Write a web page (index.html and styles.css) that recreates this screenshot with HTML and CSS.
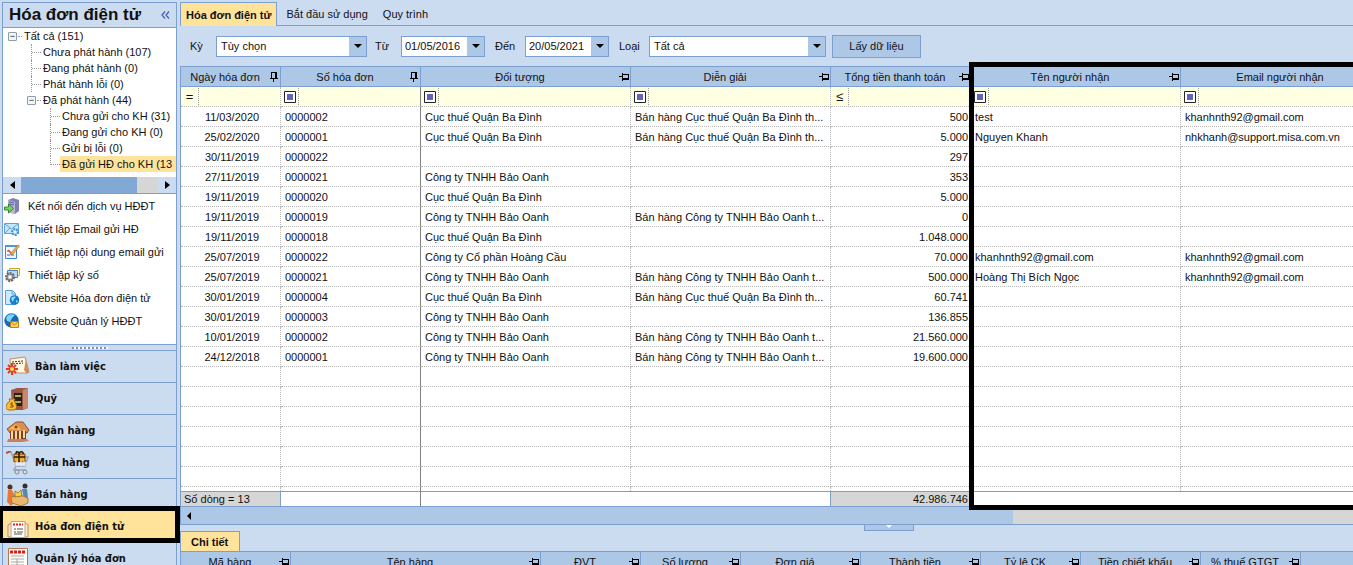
FILE: index.html
```html
<!DOCTYPE html>
<html lang="vi">
<head>
<meta charset="utf-8">
<title>Hóa đơn điện tử</title>
<link rel="stylesheet" href="styles.css">
</head>
<body>
<svg class="defs" aria-hidden="true">
  <symbol id="pin" viewBox="0 0 10 10"><path d="M0 4.500h3M3.500 1v8M4 2.500h5M9.500 2v6" fill="none" stroke="#000"/><path d="M4 6h6v2H4z"/></symbol>
  <symbol id="pinned" viewBox="0 0 10 10"><path d="M2.500 1v5M2 .5h6M1 6.500h8M4.500 7v3" fill="none" stroke="#000"/><path d="M6 0h2v6H6z"/></symbol>
  <symbol id="match" viewBox="0 0 12 12"><path d="M.5.5h11v11H.5z" fill="#fff" stroke="#223"/><path d="M3 3h6v6H3z" fill="#6464b8"/></symbol>
  <symbol id="down" viewBox="0 0 8 4"><path d="M0 0h8L4 4z"/></symbol>
</svg>
<div class="app">
  <aside class="sidebar">
    <header class="side-head"><h1>Hóa đơn điện tử</h1><button class="collapse" aria-label="Thu gọn"><svg width="9" height="8" viewBox="0 0 9 8"><path d="M4 .5L1 4l3 3.500M8 .5L5 4l3 3.500" fill="none" stroke="#3f66ac" stroke-width="1.300"/></svg></button></header>
    <div class="tree">
      <div class="node root"><button class="fold" aria-label="Thu gọn">−</button><i class="stub"></i><span>Tất cả (151)</span></div>
      <div class="node one"><i class="branch"></i><span>Chưa phát hành (107)</span></div>
      <div class="node one"><i class="branch"></i><span>Đang phát hành (0)</span></div>
      <div class="node one"><i class="branch"></i><span>Phát hành lỗi (0)</span></div>
      <div class="node sub"><button class="fold" aria-label="Thu gọn">−</button><i class="stub"></i><span>Đã phát hành (44)</span></div>
      <div class="node two"><i class="branch"></i><span>Chưa gửi cho KH (31)</span></div>
      <div class="node two"><i class="branch"></i><span>Đang gửi cho KH (0)</span></div>
      <div class="node two"><i class="branch"></i><span>Gửi bị lỗi (0)</span></div>
      <div class="node two"><i class="branch last"></i><span class="picked">Đã gửi HĐ cho KH (13</span></div>
    </div>
    <div class="hscroll"><button aria-label="Trái"><svg width="5" height="8" viewBox="0 0 5 8"><path d="M5 0v8L0 4z"/></svg></button><div class="track"><div class="thumb"></div></div><button aria-label="Phải"><svg width="5" height="8" viewBox="0 0 5 8"><path d="M0 0v8l5-4z"/></svg></button></div>
    <ul class="tasks">
      <li><a href="#"><svg width="16" height="16" viewBox="0 0 16 16"><path d="M4 2l5-2 6 2v11l-4 3-7-2z" fill="#8080b8"/><path d="M4 2l7 2v12l-7-2z" fill="#b4b4dc"/><path d="M5 4l5 1M5 6l5 1" stroke="#60609a"/><path d="M.5 9h4V6l5 4.500-5 4.500v-3h-4z" fill="#7ed060" stroke="#2f8a28"/></svg>Kết nối đến dịch vụ HĐĐT</a></li>
      <li><a href="#"><svg width="16" height="16" viewBox="0 0 16 16"><path d="M.5 2.500h14v10H.5z" fill="#c6e6fa" stroke="#5aa4dc"/><path d="M1 3l6.500 5L14 3M1 12l5-5" fill="none" stroke="#5aa4dc"/><circle cx="11" cy="11" r="3" fill="#b0d8f4" stroke="#4896d0" stroke-width="2" stroke-dasharray="2 1"/><circle cx="11" cy="11" r="1" fill="#fff"/></svg>Thiết lập Email gửi HĐ</a></li>
      <li><a href="#"><svg width="16" height="16" viewBox="0 0 16 16"><path d="M1.500 1.500h11v13h-11z" fill="#eef6ff" stroke="#4288c8"/><path d="M1 1h12v2H1z" fill="#4a98dc"/><path d="M3 6h3v2H3zM3 10h3v2H3zM7 10h3v2H7z" fill="#80b8e8"/><path d="M4 6l4 4" fill="none" stroke="#e05030" stroke-width="1.500"/><path d="M7 9l7-8 1.500 1L9 10l-2.500 1z" fill="#f4b840" stroke="#a86c28" stroke-width=".7"/></svg>Thiết lập nội dung email gửi</a></li>
      <li><a href="#"><svg width="16" height="16" viewBox="0 0 16 16"><path d="M5.500 1.500h10v7h-10z" fill="#fff3b0" stroke="#e0a020"/><path d="M3.500 3.500h10v7h-10z" fill="#b8dcf8" stroke="#3c88cc"/><circle cx="6" cy="10" r="4" fill="#ccc" stroke="#666" stroke-width="2" stroke-dasharray="2 1"/><circle cx="6" cy="10" r="3" fill="#b8b8b8" stroke="#777"/><circle cx="6" cy="10" r="1.500" fill="#fff"/></svg>Thiết lập ký số</a></li>
      <li><a href="#"><svg width="16" height="16" viewBox="0 0 16 16"><path d="M1.500.5h7l3 3v11h-10z" fill="#cfe8fc" stroke="#58a0d8"/><path d="M8 1v3h3" fill="none" stroke="#58a0d8"/><circle cx="10.500" cy="10" r="4.800" fill="#187cc8"/><path d="M7 9c1-3 4-3 5-2l-2 2-1 3zM12 10l2 1-2 2z" fill="#8ce0f8"/></svg>Website Hóa đơn điện tử</a></li>
      <li><a href="#"><svg width="16" height="16" viewBox="0 0 16 16"><circle cx="7.500" cy="7.500" r="7.200" fill="#1868b8"/><path d="M2 5c2-5 7-4 9-3L8 5 6 9 3 8z" fill="#7cd4fa"/><path d="M6.500 8.500h8v6h-8z" fill="#ffd060" stroke="#c08018"/><path d="M7 9l3.500 3L14 9" fill="none" stroke="#c08018"/></svg>Website Quản lý HĐĐT</a></li>
    </ul>
    <div class="splitter"></div>
    <nav class="modules">
      <a href="#"><svg width="24" height="24" viewBox="0 0 24 24"><path d="M4 4l15-2 4 15-3 1H5z" fill="#fff6dc" stroke="#b89468"/><path d="M20 4l3 13-2 2-3-4z" fill="#c89060"/><path d="M6 7l11-1M7 9l10-1" stroke="#333" stroke-dasharray="2 1"/><path d="M6 8v12M0 14h12M2 10l8 8M10 10l-8 8" stroke="#e83828" stroke-width="2"/><circle cx="6" cy="14" r="2" fill="#ffe040"/></svg>Bàn làm việc</a>
      <a href="#"><svg width="24" height="24" viewBox="0 0 24 24"><path d="M5 3l6-2h11v20l-5 2H6z" fill="#9a5844"/><path d="M17 3l5-2v20l-5 2z" fill="#c88870"/><path d="M8 6h8v13H8z" fill="#282018"/><path d="M9 9h6M9 15h6" stroke="#a8b060" stroke-width="2"/><path d="M3 12l1 2c-5 3-5 9-1 9h4c5 0 4-6 1-9l1-2z" fill="#f8c030" stroke="#a86810"/><path d="M7 16H5v2h2v2H4" fill="none" stroke="#804808"/></svg>Quỹ</a>
      <a href="#"><svg width="24" height="24" viewBox="0 0 24 24"><path d="M1 10l9-7h7l6 8-2 3H4z" fill="#d89058" stroke="#905030"/><path d="M4 12h16v8H4z" fill="#7a4030"/><path d="M6 12v8M10 12v8M14 12v8M18 11v8" stroke="#ffd890" stroke-width="2"/><path d="M2 20h19l2 2-7 1H1z" fill="#c88060"/><path d="M3 10l7-5 5 6z" fill="#ffb848"/><circle cx="10" cy="8" r="1.500" fill="#804010"/></svg>Ngân hàng</a>
      <a href="#"><svg width="24" height="24" viewBox="0 0 24 24"><path d="M0 2l5-2" stroke="#b05050" stroke-width="2"/><path d="M5 1l3 8 2 6h9l3-9H8M10 15l-2 4h12" fill="none" stroke="#98a4b8" stroke-width="1.500"/><path d="M8 3h11v8H8z" fill="#f0b030" stroke="#704010"/><path d="M13 3v8M8 6h11M10 3c0-4 3-2 3 0 1-4 5-2 4 0" fill="none" stroke="#301808" stroke-width="1.500"/><path d="M8 12h13M9 14h11M11 10v5M15 10v5M18 10v5" stroke="#eef2fa"/><circle cx="11" cy="21" r="2" fill="#dde" stroke="#789"/><circle cx="19" cy="21" r="2" fill="#dde" stroke="#789"/></svg>Mua hàng</a>
      <a href="#"><svg width="24" height="24" viewBox="0 0 24 24"><circle cx="4" cy="4" r="2.500" fill="#503020"/><path d="M2 7h4l3 6-1 7-3 3-4-4z" fill="#e87838"/><circle cx="19" cy="3" r="2.500" fill="#303030"/><path d="M16 6h5l1 9-4 1z" fill="#5888b0"/><path d="M5 14l9-2 8 3v5l-7 3-9-3z" fill="#e8b870" stroke="#b07838"/><path d="M9 8l3 2 3-3 1 6-7 1z" fill="#f8d040" stroke="#806018" stroke-width=".7"/></svg>Bán hàng</a>
      <a href="#" class="active"><svg width="24" height="24" viewBox="0 0 24 24"><path d="M2 10l6-3h10l4 3v12H2z" fill="#f8ead0" stroke="#b88c68"/><path d="M5 6.500h14v16H5z" fill="#fffdf8" stroke="#c4a080"/><path d="M7 9.500h10" stroke="#e02020" stroke-width="2" stroke-dasharray="2 1"/><path d="M8 14h2m1 0h6M8 17h2m1 0h6M8 19h8" stroke="#555"/></svg>Hóa đơn điện tử</a>
      <a href="#"><svg width="24" height="24" viewBox="0 0 24 24"><path d="M2.500 1.500h19v22h-19z" fill="#fffdf6" stroke="#b87850"/><path d="M4 5h16" stroke="#e01818" stroke-width="3" stroke-dasharray="3 1"/><path d="M5 9h13M5 12h13M5 15h13M5 18h13M11 12v10" stroke="#a8a8a8"/></svg>Quản lý hóa đơn</a>
    </nav>
  </aside>
  <main class="content">
    <div class="tabs"><button class="tab on">Hóa đơn điện tử</button><button class="tab">Bắt đầu sử dụng</button><button class="tab">Quy trình</button></div>
    <form class="filters">
      <label for="period">Kỳ</label>
      <div class="combo wide"><select id="period"><option>Tùy chọn</option></select><span class="drop"><svg width="8" height="4"><use href="#down"/></svg></span></div>
      <label for="from">Từ</label>
      <div class="combo date"><input id="from" value="01/05/2016"><span class="drop"><svg width="8" height="4"><use href="#down"/></svg></span></div>
      <label for="to">Đến</label>
      <div class="combo date"><input id="to" value="20/05/2021"><span class="drop"><svg width="8" height="4"><use href="#down"/></svg></span></div>
      <label for="kind">Loại</label>
      <div class="combo wider"><select id="kind"><option>Tất cả</option></select><span class="drop"><svg width="8" height="4"><use href="#down"/></svg></span></div>
      <button type="button" class="load">Lấy dữ liệu</button>
    </form>
    <section class="grid-area">
      <div class="grid">
      <table class="invoices">
        <colgroup><col class="w100"><col class="w140"><col class="w210"><col class="w200"><col class="w140"><col class="w210"><col class="w210"></colgroup>
        <thead>
          <tr><th><div><span>Ngày hóa đơn</span><svg><use href="#pinned"/></svg></div></th><th><div><span>Số hóa đơn</span><svg><use href="#pinned"/></svg></div></th><th><div><span>Đối tượng</span><svg><use href="#pin"/></svg></div></th><th><div><span>Diễn giải</span><svg><use href="#pin"/></svg></div></th><th><div><span>Tổng tiền thanh toán</span><svg><use href="#pin"/></svg></div></th><th><div><span>Tên người nhận</span><svg><use href="#pin"/></svg></div></th><th><div><span>Email người nhận</span><svg><use href="#pin"/></svg></div></th></tr>
          <tr class="match"><td><b>=</b></td><td><b><svg><use href="#match"/></svg></b></td><td><b><svg><use href="#match"/></svg></b></td><td><b><svg><use href="#match"/></svg></b></td><td><b>≤</b></td><td><b><svg><use href="#match"/></svg></b></td><td><b><svg><use href="#match"/></svg></b></td></tr>
        </thead>
        <tbody>
          <tr><td>11/03/2020</td><td>0000002</td><td>Cục thuế Quận Ba Đình</td><td>Bán hàng Cục thuế Quận Ba Đình th...</td><td>500</td><td>test</td><td>khanhnth92@gmail.com</td></tr>
          <tr><td>25/02/2020</td><td>0000001</td><td>Cục thuế Quận Ba Đình</td><td>Bán hàng Cục thuế Quận Ba Đình th...</td><td>5.000</td><td>Nguyen Khanh</td><td>nhkhanh@support.misa.com.vn</td></tr>
          <tr><td>30/11/2019</td><td>0000022</td><td></td><td></td><td>297</td><td></td><td></td></tr>
          <tr><td>27/11/2019</td><td>0000021</td><td>Công ty TNHH Bảo Oanh</td><td></td><td>353</td><td></td><td></td></tr>
          <tr><td>19/11/2019</td><td>0000020</td><td>Cục thuế Quận Ba Đình</td><td></td><td>5.000</td><td></td><td></td></tr>
          <tr><td>19/11/2019</td><td>0000019</td><td>Công ty TNHH Bảo Oanh</td><td>Bán hàng Công ty TNHH Bảo Oanh t...</td><td>0</td><td></td><td></td></tr>
          <tr><td>19/11/2019</td><td>0000018</td><td>Cục thuế Quận Ba Đình</td><td></td><td>1.048.000</td><td></td><td></td></tr>
          <tr><td>25/07/2019</td><td>0000022</td><td>Công ty Cổ phần Hoàng Cầu</td><td></td><td>70.000</td><td>khanhnth92@gmail.com</td><td>khanhnth92@gmail.com</td></tr>
          <tr><td>25/07/2019</td><td>0000021</td><td>Công ty TNHH Bảo Oanh</td><td>Bán hàng Công ty TNHH Bảo Oanh t...</td><td>500.000</td><td>Hoàng Thị Bích Ngọc</td><td>khanhnth92@gmail.com</td></tr>
          <tr><td>30/01/2019</td><td>0000004</td><td>Cục thuế Quận Ba Đình</td><td>Bán hàng Cục thuế Quận Ba Đình th...</td><td>60.741</td><td></td><td></td></tr>
          <tr><td>30/01/2019</td><td>0000003</td><td>Công ty TNHH Bảo Oanh</td><td></td><td>136.855</td><td></td><td></td></tr>
          <tr><td>10/01/2019</td><td>0000002</td><td>Công ty TNHH Bảo Oanh</td><td>Bán hàng Công ty TNHH Bảo Oanh t...</td><td>21.560.000</td><td></td><td></td></tr>
          <tr><td>24/12/2018</td><td>0000001</td><td>Công ty TNHH Bảo Oanh</td><td>Bán hàng Công ty TNHH Bảo Oanh t...</td><td>19.600.000</td><td></td><td></td></tr>
          <tr><td></td><td></td><td></td><td></td><td></td><td></td><td></td></tr>
          <tr><td></td><td></td><td></td><td></td><td></td><td></td><td></td></tr>
          <tr><td></td><td></td><td></td><td></td><td></td><td></td><td></td></tr>
          <tr><td></td><td></td><td></td><td></td><td></td><td></td><td></td></tr>
          <tr><td></td><td></td><td></td><td></td><td></td><td></td><td></td></tr>
          <tr><td></td><td></td><td></td><td></td><td></td><td></td><td></td></tr>
          <tr class="cut"><td></td><td></td><td></td><td></td><td></td><td></td><td></td></tr>
        </tbody>
        <tfoot><tr><td class="sum">Số dòng = 13</td><td></td><td></td><td class="edge"></td><td class="sum">42.986.746</td><td></td><td></td></tr></tfoot>
      </table>
      </div>
      <div class="main-scroll"><div class="main-thumb"><svg width="4" height="8" viewBox="0 0 4 8"><path d="M4 0v8L0 4z"/></svg></div></div>
      <div class="frame"></div>
    </section>
    <div class="handle"><button aria-label="Thu gọn chi tiết"><svg width="6" height="3" viewBox="0 0 6 3"><path d="M0 0h6L3 3z" fill="#fff"/></svg></button></div>
    <div class="detail-tabs"><button class="tab on">Chi tiết</button></div>
    <div class="grid details">
      <table>
        <colgroup><col class="w110"><col class="w250"><col class="w100"><col class="w100"><col class="w120"><col class="w120"><col class="w100"><col class="w120"><col class="w100"><col class="w100"></colgroup>
        <thead><tr><th><div><span>Mã hàng</span><svg><use href="#pin"/></svg></div></th><th><div><span>Tên hàng</span><svg><use href="#pin"/></svg></div></th><th><div><span>ĐVT</span><svg><use href="#pin"/></svg></div></th><th><div><span>Số lượng</span><svg><use href="#pin"/></svg></div></th><th><div><span>Đơn giá</span><svg><use href="#pin"/></svg></div></th><th><div><span>Thành tiền</span><svg><use href="#pin"/></svg></div></th><th><div><span>Tỷ lệ CK</span><svg><use href="#pin"/></svg></div></th><th><div><span>Tiền chiết khấu</span><svg><use href="#pin"/></svg></div></th><th><div><span>% thuế GTGT</span><svg><use href="#pin"/></svg></div></th><th></th></tr></thead>
      </table>
    </div>
  </main>
</div>
</body>
</html>
```
FILE: styles.css
```css
*, *::before, *::after { box-sizing: border-box; }
html, body { height: 100%; }
body {
  margin: 0;
  overflow: hidden;
  background: #ccdcf0;
  color: #111;
  font: 11px/16px "Liberation Sans", Arial, sans-serif;
}
button, input, select { font: inherit; color: inherit; margin: 0; padding: 0; border: 0; background: none; border-radius: 0; }
a { color: inherit; text-decoration: none; }
svg { flex: none; }
.defs { display: none; }
.app { display: flex; height: 100%; }

.sidebar { width: 180px; flex: none; padding: 2px 3px 0 2px; }
.sidebar > * { border: 1px solid #7ba0cf; border-top: 0; }
.side-head { display: flex; align-items: center; justify-content: space-between; height: 26px; padding: 0 6px; }
.sidebar > .side-head { border-top: 1px solid #7ba0cf; }
.side-head h1 { margin: 0; font-size: 17px; line-height: 24px; white-space: nowrap; }
.collapse { display: flex; }
.tree { background: #fff; height: 149px; overflow: hidden; }
.sidebar > .tree { border-bottom: 0; }
.node { display: flex; align-items: center; height: 16px; white-space: nowrap; }
.root { padding-left: 5px; }
.sub { padding-left: 24px; }
.one { padding-left: 28px; }
.two { padding-left: 47px; }
.fold { width: 9px; height: 9px; border: 1px solid #8c9cb0; border-radius: 1px; font-size: 9px; line-height: 7px; background: #f4f4f0; flex: none; }
.stub { width: 4px; margin: 0 2px 0 1px; border-bottom: 1px dotted #999; flex: none; }
.branch { width: 10px; height: 16px; margin-right: 2px; border-left: 1px dotted #999; flex: none; }
.branch::before { content: ""; display: block; height: 9px; border-bottom: 1px dotted #999; }
.branch.last { height: 9px; align-self: flex-start; }
.picked { background: #fee39c; margin-left: -2px; padding: 0 20px 0 2px; }
.hscroll { display: flex; height: 17px; background: #fff; }
.hscroll button { width: 18px; background: #ccdcf0; display: flex; align-items: center; justify-content: center; }
.track { flex: 1; background: #d6d6d6; }
.thumb { width: 85%; height: 100%; background: #82a9d6; }
.tasks { list-style: none; margin: 0; padding: 0 0 12px; background: #fff; }
.tasks a { display: flex; align-items: center; gap: 8px; height: 23px; padding-left: 1px; white-space: nowrap; }
.splitter { height: 6px; display: flex; justify-content: center; align-items: center; }
.splitter::before { content: ""; width: 36px; height: 2px; background: repeating-linear-gradient(90deg, #6e92c8 0 2px, #fff 2px 4px); }
.modules a { position: relative; display: flex; align-items: center; gap: 5px; height: 32px; padding-left: 3px; border-bottom: 1px solid #7ba0cf; font: bold 11px/16px "DejaVu Sans Condensed", "DejaVu Sans", sans-serif; white-space: nowrap; }
.modules .active { background: #ffe39b; }
.modules .active::after { content: ""; position: absolute; top: -5px; left: -3px; width: 180px; height: 37px; border: 5px solid #000; border-left-width: 3px; z-index: 1; }

.content { flex: 1; min-width: 0; overflow: hidden; }
.tabs { display: flex; height: 26px; padding-top: 2px; background: linear-gradient(#7ba0cf, #7ba0cf) bottom / 100% 1px no-repeat; }
.tab { padding: 0 6px 0 9px; white-space: nowrap; }
.tab.on { background: #ffe39b; border: 1px solid #7ba0cf; border-bottom: 0; font-weight: bold; padding: 0 5px; }
.filters { display: flex; align-items: center; height: 40px; padding: 0 10px; }
.filters label { width: 26px; flex: none; }
.combo { display: grid; grid-template-columns: 1fr 17px; height: 21px; border: 1px solid #7ba0cf; background: #fff; margin-right: 8px; }
.combo select, .combo input { grid-area: 1 / 1 / 2 / 3; appearance: none; width: 100%; min-width: 0; outline: 0; padding-left: 4px; }
.combo input { padding-left: 3px; }
.drop { grid-area: 1 / 2; display: flex; align-items: center; justify-content: center; background: #adc7e7; pointer-events: none; z-index: 1; }
.wide { width: 151px; }
.date { width: 84px; margin-right: 10px; }
.date + label { width: 30px; }
.wider { width: 177px; margin-right: 6px; }
.load { width: 89px; height: 23px; border: 1px solid #7ba0cf; background: #adc7e7; }

.grid-area { position: relative; }
.grid { border-top: 1px solid #7ba0cf; border-left: 1px solid #7ba0cf; overflow: hidden; background: #fff; }
table { table-layout: fixed; width: 100%; border-collapse: separate; border-spacing: 0; }
.invoices { width: 1210px; }
.details table { width: 1220px; }
.details { background: #adc7e7; }
.w100 { width: 100px; }
.w110 { width: 110px; }
.w120 { width: 120px; }
.w140 { width: 140px; }
.w200 { width: 200px; }
.w210 { width: 210px; }
.w250 { width: 250px; }
th { height: 20px; padding: 0; font-weight: normal; background: #adc7e7; border: solid #7ba0cf; border-width: 0 1px 1px 0; }
th div { display: flex; align-items: center; padding-right: 1px; }
th span { flex: 1; text-align: center; white-space: nowrap; }
th svg { width: 10px; height: 10px; }
td { height: 20px; padding: 0 1px 0 4px; line-height: 16px; border: dotted #b8b8b8; border-width: 0 1px 1px 0; white-space: nowrap; }
.invoices td:nth-child(2) { border-right: 1px solid #808080; }
tbody td:nth-child(1) { text-align: center; }
tbody td:nth-child(5), tfoot td:nth-child(5) { text-align: right; padding-right: 2px; }
.match td { background: #ffffe1; padding: 0 3px; }
.match b { display: flex; align-items: center; justify-content: center; width: 15px; height: 17px; border-right: 1px dotted #999; padding-right: 3px; font-weight: normal; font-size: 13px; }
.match svg { width: 12px; height: 12px; }
.cut td { height: 4px; padding: 0; border-bottom: 0; }
tfoot td { height: 16px; line-height: 14px; padding: 0 3px; border: 1px solid #7ba0cf; border-left: 0; border-right: 0; }
tfoot .sum { background: #d6d6d6; border-right: 1px solid #7ba0cf; }
tfoot .edge { border-right: 1px solid #7ba0cf; }
.main-scroll { height: 18px; background: #d6d6d6; border: solid #7ba0cf; border-width: 0 0 1px 1px; }
.main-thumb { width: 71%; height: 100%; background: #adc7e7; display: flex; align-items: center; padding-left: 6px; }
.frame { position: absolute; left: 789px; right: -10px; top: -4px; bottom: 15px; border: 5px solid #000; }
.handle { display: flex; justify-content: center; height: 6px; padding-left: 244px; }
.handle button { width: 50px; height: 6px; border: 1px solid #7ba0cf; border-top: 0; background: #adc7e7; display: flex; justify-content: center; }
.detail-tabs { display: flex; height: 20px; }
.detail-tabs .tab.on { padding: 0 11px 0 10px; }
```
